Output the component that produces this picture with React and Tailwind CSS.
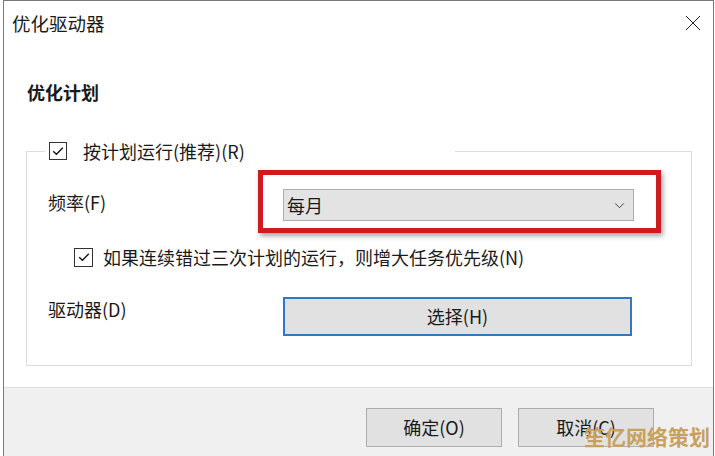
import React from "react";

const font = { fontFamily: '"Noto Sans CJK SC", "Noto Sans", sans-serif' };

// small check box drawn like the Win10 one
function CheckBox({ size = "w-[18px] h-[18px]" }) {
  return (
    <span className={`${size} shrink-0 border border-[#333] bg-white flex items-center justify-center`}>
      <svg viewBox="0 0 16 16" className="w-[14px] h-[14px]" fill="none" stroke="#111" strokeWidth="1.5">
        <path d="M2.5 8.2 L6.2 11.8 L13.5 4.2" />
      </svg>
    </span>
  );
}

function Button({ children, className = "" }) {
  return (
    <button className={`h-[39px] bg-[#e1e1e1] text-[18px] text-[#1a1a1a] flex items-center justify-center ${className}`}>
      {children}
    </button>
  );
}

export default function App() {
  return (
    <div className="w-[715px] h-[456px] bg-white overflow-hidden" style={font}>
      <div className="ml-[3px] w-[711px] h-full flex flex-col border-l border-r border-t border-[#7a7a7a] text-[#1a1a1a]">
        <div className="flex-1">
          {/* title bar */}
          <div className="flex items-center justify-between pt-[10px] pl-[8px] pr-[12px]">
            <span className="text-[18.5px] leading-[24px]">优化驱动器</span>
            <svg viewBox="0 0 16 16" className="w-[16px] h-[16px]" fill="none" stroke="#222" strokeWidth="1">
              <path d="M1 1 L15 15 M15 1 L1 15" />
            </svg>
          </div>

          <div className="mt-[45px] pl-[23px] text-[18px] leading-[24px] font-bold">优化计划</div>

          <fieldset className="mt-[37px] ml-[22px] w-[666px] border border-[#dcdcdc] pb-[29px]">
            <legend className="ml-[18px] w-[410px] pl-[4px] bg-white">
              <span className="flex items-center h-[20px]">
                <CheckBox />
                <span className="ml-[16px] text-[18px] leading-[20px]">按计划运行(推荐)(R)</span>
              </span>
            </legend>

            <div className="pl-[21px]">
              <div className="mt-[28px] flex items-center">
                <span className="w-[235px] text-[18px] leading-[24px] pb-[7px]">频率(F)</span>
                <div className="relative">
                  <div className="absolute -left-[25px] -top-[19px] w-[403px] h-[63px] border-[5px] border-[#cf1b1e] shadow-[2px_3px_5px_rgba(0,0,0,0.35)]"></div>
                  <div className="w-[351px] h-[32px] bg-[#e3e3e3] border border-[#adadad] flex items-center justify-between pl-[3px] pr-[8px]">
                    <span className="text-[18px] leading-[24px]">每月</span>
                    <svg viewBox="0 0 12 8" className="w-[11px] h-[7px]" fill="none" stroke="#333" strokeWidth="1">
                      <path d="M1 1.5 L6 6.5 L11 1.5" />
                    </svg>
                  </div>
                </div>
              </div>

              <div className="mt-[26px] ml-[26px] flex items-center">
                <CheckBox size="w-[19px] h-[19px]" />
                <span className="ml-[10px] text-[18px] leading-[20px]">如果连续错过三次计划的运行，则增大任务优先级(N)</span>
              </div>

              <div className="mt-[30px] flex items-start">
                <span className="w-[235px] text-[18px] leading-[24px]">驱动器(D)</span>
                <Button className="w-[349px] border-2 border-[#2f78c4]">选择(H)</Button>
              </div>
            </div>
          </fieldset>
        </div>

        {/* bottom bar */}
        <div className="relative h-[69px] bg-[#f0f0f0] border-t border-[#dfdfdf] flex justify-end items-start pt-[20px] pr-[59px] gap-[16px]">
          <Button className="w-[136px] border border-[#adadad]">确定(O)</Button>
          <Button className="w-[136px] border border-[#adadad]">取消(C)</Button>
          <span className="absolute left-[580px] top-[34px] text-[21px] leading-[28px] font-bold text-[#c9a15f] whitespace-nowrap">笙亿网络策划</span>
        </div>
      </div>
    </div>
  );
}
